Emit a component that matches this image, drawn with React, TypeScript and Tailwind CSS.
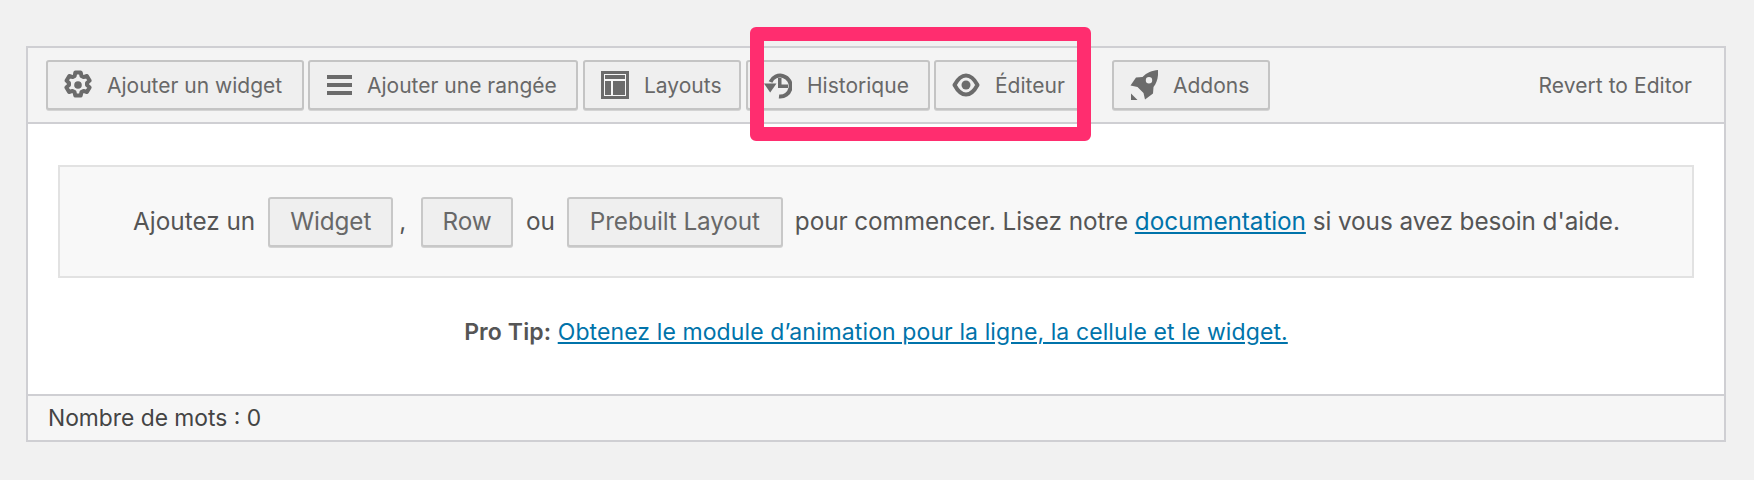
import type { ReactNode } from 'react';

const ICON = '#6b6b6b';

const GearIcon = () => (
  <svg width="28" height="30" viewBox="0 0 28 30" fill="none" stroke={ICON} strokeLinejoin="round">
    <circle cx="14" cy="15" r="3.800" fill={ICON} stroke="none" />
    <path
      strokeWidth="4"
      d="M11.300 2.500h5.400l.8 3.500 2 1.100 3.400-1.100 2.700 4.600-2.600 2.400v2l2.600 2.400-2.700 4.600-3.400-1.100-2 1.100-.8 3.500h-5.400l-.8-3.500-2-1.100-3.400 1.100-2.700-4.600 2.600-2.400v-2L2.600 10.600l2.700-4.600 3.400 1.100 2-1.100z"
    />
  </svg>
);

const MenuIcon = () => (
  <svg width="26" height="26" viewBox="0 0 26 26" fill={ICON}>
    <rect x="1" y="3" width="25" height="4" />
    <rect x="1" y="11" width="25" height="4" />
    <rect x="1" y="19" width="25" height="4" />
  </svg>
);

const LayoutIcon = () => (
  <svg width="28" height="28" viewBox="0 0 28 28">
    <rect width="28" height="28" fill={ICON} />
    <rect x="3" y="3" width="22" height="22" fill="#f7f7f7" />
    <rect x="4" y="4" width="20" height="4" fill={ICON} />
    <rect x="4" y="10" width="6" height="14" fill={ICON} />
    <rect x="12" y="10" width="12" height="14" fill={ICON} />
  </svg>
);

const HistoryIcon = () => (
  <svg width="28" height="28" viewBox="0 0 28 28" fill="none" stroke={ICON}>
    <path strokeWidth="4" d="M6.500 11A10.500 10.500 0 1 1 15 25.500" />
    <path d="M0 12.500h12.500L6.200 21.500z" fill={ICON} stroke="none" />
    <path d="M14 7h3.500v6.500H24V17H14z" fill={ICON} stroke="none" />
  </svg>
);

const EyeIcon = () => (
  <svg width="28" height="28" viewBox="0 0 28 28" fill="none" stroke={ICON}>
    <path strokeWidth="4" strokeLinejoin="round" d="M2.500 14C6 7.500 10 4.500 14 4.500s8 3 11.500 9.500C22 20.500 18 23.500 14 23.500S6 20.500 2.500 14z" />
    <circle cx="14" cy="14" r="4.500" fill={ICON} stroke="none" />
  </svg>
);

const RocketIcon = () => (
  <svg width="28" height="30" viewBox="0 0 28 30" fill={ICON}>
    <path
      fillRule="evenodd"
      d="M28 0c.5 7-1 12.500-4.500 17l-.5 6.500-8 6-1.500-6.500L7.500 17 .5 15.500 6 7.500l6.500-.5C17 2.500 22 .5 28 0zM19 7a3.200 3.200 0 1 0 0 6.400A3.200 3.200 0 0 0 19 7z"
    />
    <path d="M1 23.500l6.500 6.500H1z" />
  </svg>
);

function ToolButton({ icon, label, className }: { icon: ReactNode; label: string; className: string }) {
  return (
    <div className={`flex items-center gap-[15px] pl-[16px] h-[50px] rounded-[3px] border-2 border-[#c4c4c4] bg-[#efefef] shadow-[0_1px_0_#d4d4d4] text-[#686868] text-[21px] ${className}`}>
      {icon}
      <span className="pt-[2px]">{label}</span>
    </div>
  );
}

function InlineButton({ label, className }: { label: string; className: string }) {
  return (
    <span className={`flex items-center justify-center h-[50px] rounded-[3px] border-2 border-[#c8c8c8] bg-[#efefef] shadow-[0_1px_0_#d4d4d4] text-[#686868] ${className}`}>
      {label}
    </span>
  );
}

export default function App() {
  return (
    <div className="relative w-[1754px] h-[480px] overflow-hidden bg-[#f1f1f1] px-[26px] pt-[46px] font-['Inter','Liberation_Sans',sans-serif]">
      <div className="w-[1700px] h-[396px] flex flex-col border-2 border-[#cfcfd3] bg-white">
        {/* toolbar */}
        <div className="flex items-center h-[76px] shrink-0 border-b-2 border-[#cfcfd3] bg-[#f4f4f4] pl-[18px]">
          <ToolButton icon={<GearIcon />} label="Ajouter un widget" className="w-[258px]" />
          <ToolButton icon={<MenuIcon />} label="Ajouter une rangée" className="w-[270px] ml-[4px]" />
          <ToolButton icon={<LayoutIcon />} label="Layouts" className="w-[158px] ml-[5px]" />
          <ToolButton icon={<HistoryIcon />} label="Historique" className="w-[184px] ml-[5px]" />
          <ToolButton icon={<EyeIcon />} label="Éditeur" className="w-[150px] ml-[4px]" />
          <ToolButton icon={<RocketIcon />} label="Addons" className="w-[158px] ml-[28px]" />
          <span className="ml-auto mr-[32px] pt-[2px] text-[21px] tracking-[0.05px] text-[#666666]">Revert to Editor</span>
        </div>

        {/* body */}
        <div className="flex-1 flex flex-col px-[30px] pt-[41px]">
          <div className="h-[113px] flex items-center justify-center gap-[13px] border-2 border-[#e2e2e2] bg-[#f8f8f8] text-[24.300px] tracking-[-0.1px] text-[#555555]">
            <span className="tracking-normal ml-[1px]">Ajoutez un</span>
            <InlineButton label="Widget" className="w-[125px]" />
            <span className="-ml-[7px] mr-[2px]">,</span>
            <InlineButton label="Row" className="w-[92px]" />
            <span>ou</span>
            <InlineButton label="Prebuilt Layout" className="w-[216px] -ml-[1px]" />
            <span className="-ml-[1px] tracking-[-0.07px]">
              pour commencer. Lisez notre <a className="text-[#0073aa] underline">documentation</a> si vous avez besoin d'aide.
            </span>
          </div>
          <p className="mt-[37px] text-center text-[23px] tracking-[0.1px] text-[#555555]">
            <strong className="font-semibold">Pro Tip:</strong>{' '}
            <a className="text-[#0073aa] underline">Obtenez le module d’animation pour la ligne, la cellule et le widget.</a>
          </p>
        </div>

        {/* status */}
        <div className="h-[46px] shrink-0 flex items-center border-t-2 border-[#cfcfd3] bg-[#f6f6f6] px-[20px] text-[22.800px] text-[#444444]">
          Nombre de mots : 0
        </div>
      </div>

      {/* annotation */}
      <div className="absolute left-[750px] top-[27px] w-[341px] h-[114px] rounded-[6px] border-[14px] border-[#ff2d6f] pointer-events-none" />
    </div>
  );
}
